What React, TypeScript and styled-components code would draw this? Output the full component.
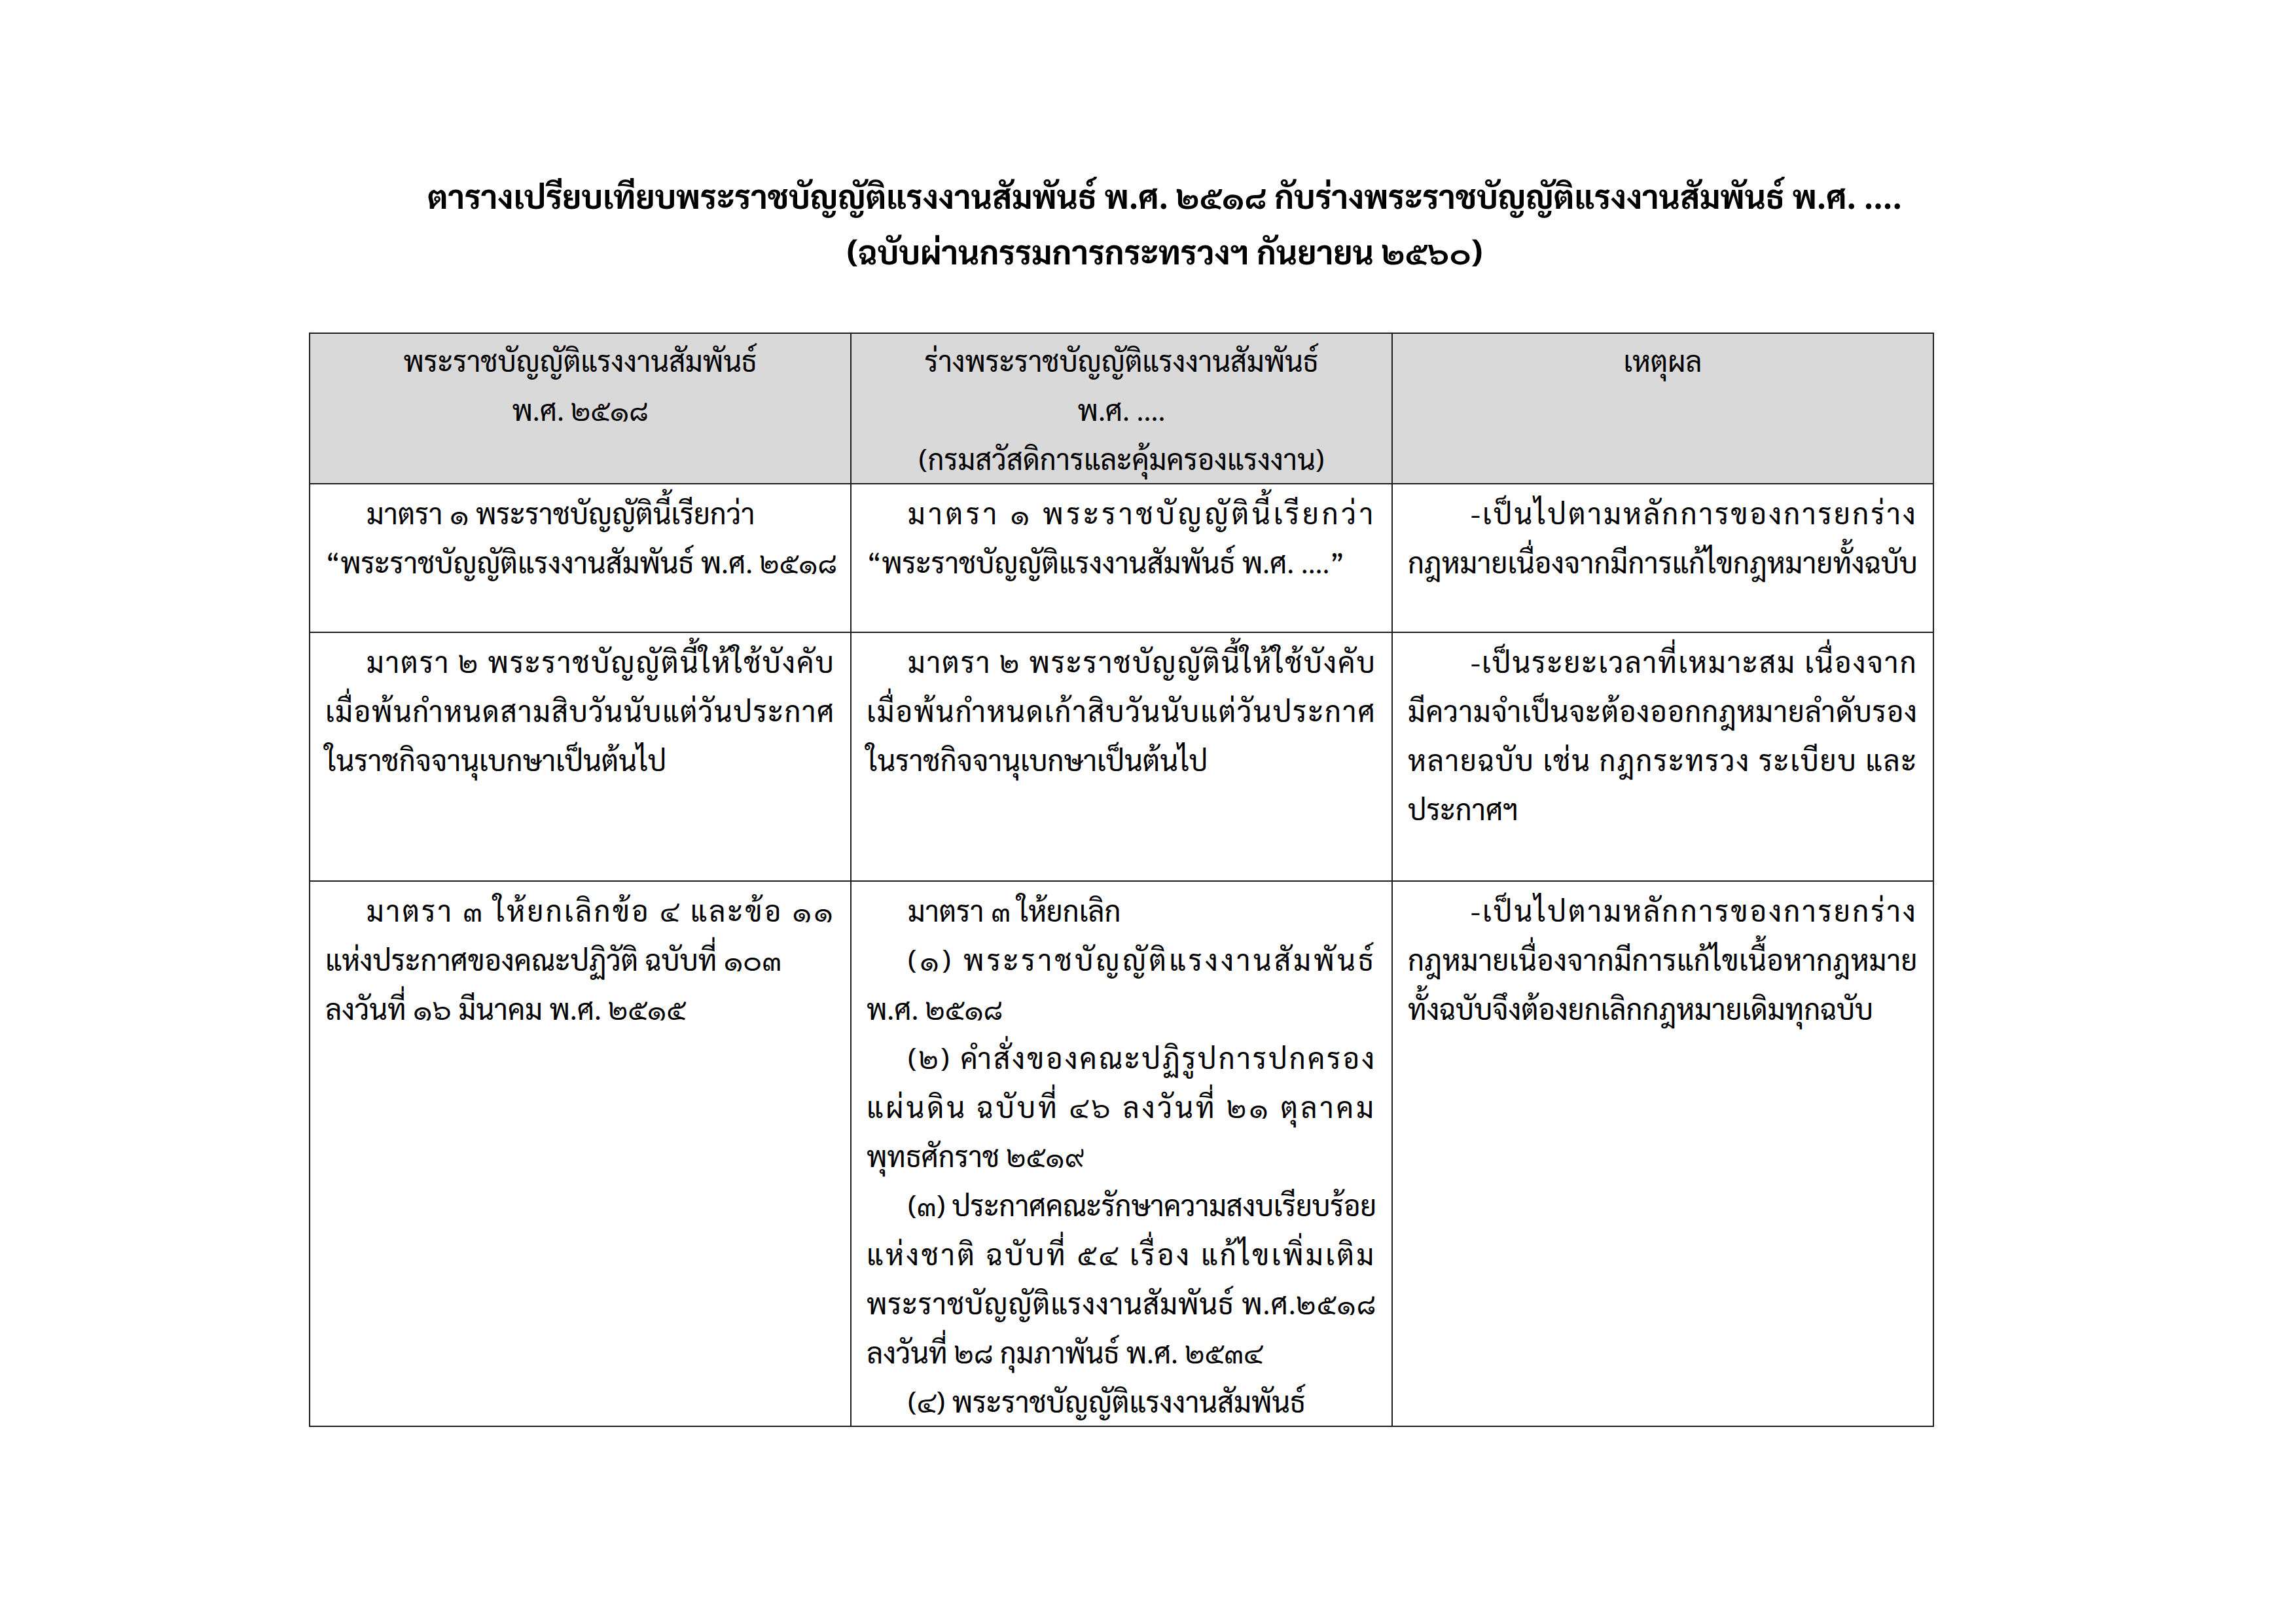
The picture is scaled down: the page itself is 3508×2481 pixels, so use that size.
import React, { useLayoutEffect, useRef } from 'react';
import styled, { createGlobalStyle } from 'styled-components';

const LINE = 75;
const THAI = `"TH Sarabun New", "TH SarabunPSK", "Sarabun", "Noto Sans Thai", "Noto Serif Thai", "Loma", "Garuda", "Norasi", "Liberation Sans", sans-serif`;

const GlobalStyle = createGlobalStyle`
  html, body {
    margin: 0;
    padding: 0;
    background: #ffffff;
  }
  body {
    font-family: ${THAI};
    color: #000;
  }
`;

const Page = styled.div`
  width: 3508px;
  min-height: 2481px;
  padding: 256px 0 0 472px;
  box-sizing: border-box;
`;

const Title = styled.h1`
  width: 2481px;
  margin: 0 0 82px;
  padding-left: 134px;
  box-sizing: border-box;
  font-size: 50px;
  font-weight: 700;
  line-height: 85px;
  text-align: center;
  white-space: nowrap;
`;

const Table = styled.table`
  width: 2483px;
  border-collapse: collapse;
  table-layout: fixed;
`;

const Row = styled.tr<{ $h: number }>`
  height: ${(p) => p.$h}px;
`;

const Cell = styled.td<{ $head?: boolean }>`
  width: 827px;
  box-sizing: border-box;
  border: 2px solid #1e1e1e;
  padding: ${(p) => (p.$head ? 3 : 6)}px 23px 0;
  vertical-align: top;
  background: ${(p) => (p.$head ? '#d9d9d9' : '#ffffff')};
  text-align: ${(p) => (p.$head ? 'center' : 'left')};
  font-weight: 400;
  font-size: 43.5px;
  line-height: ${LINE}px;
`;

const LineBox = styled.div<{ $indent: number }>`
  white-space: nowrap;
  padding-left: ${(p) => p.$indent}px;
`;

const LineText = styled.span`
  display: inline-block;
`;

// Word's "Thai distributed" lines: spread the letters so the line fills the cell.
const seg = typeof Intl !== 'undefined' && (Intl as any).Segmenter
  ? new (Intl as any).Segmenter('th', { granularity: 'grapheme' })
  : null;

function Line({ text, indent = 0, full = false }: { text: string; indent?: number; full?: boolean }) {
  const boxRef = useRef<HTMLDivElement>(null);
  const textRef = useRef<HTMLSpanElement>(null);

  useLayoutEffect(() => {
    if (!full) return;
    const measure = () => {
      const box = boxRef.current;
      const t = textRef.current;
      if (!box || !t) return;
      t.style.letterSpacing = '0px';
      const avail = box.clientWidth - indent;
      const natural = t.getBoundingClientRect().width;
      const n = seg ? Array.from(seg.segment(text)).length : text.length;
      t.style.letterSpacing = `${(avail - natural) / n}px`;
    };
    measure();
    document.fonts?.ready.then(measure);
  }, [full, indent, text]);

  return (
    <LineBox ref={boxRef} $indent={indent}>
      <LineText ref={textRef}>{text}</LineText>
    </LineBox>
  );
}

type L = { t: string; i?: number; f?: boolean };

const IND = 63;
const IND3 = 96;

const rows: { h: number; cells: L[][] }[] = [
  {
    h: 227,
    cells: [
      [
        { t: 'มาตรา ๑ พระราชบัญญัตินี้เรียกว่า', i: IND },
        { t: '“พระราชบัญญัติแรงงานสัมพันธ์ พ.ศ. ๒๕๑๘' },
      ],
      [
        { t: 'มาตรา ๑ พระราชบัญญัตินี้เรียกว่า', i: IND, f: true },
        { t: '“พระราชบัญญัติแรงงานสัมพันธ์ พ.ศ. ....”' },
      ],
      [
        { t: '-เป็นไปตามหลักการของการยกร่าง', i: IND3, f: true },
        { t: 'กฎหมายเนื่องจากมีการแก้ไขกฎหมายทั้งฉบับ', f: true },
      ],
    ],
  },
  {
    h: 380,
    cells: [
      [
        { t: 'มาตรา ๒ พระราชบัญญัตินี้ให้ใช้บังคับ', i: IND, f: true },
        { t: 'เมื่อพ้นกำหนดสามสิบวันนับแต่วันประกาศ', f: true },
        { t: 'ในราชกิจจานุเบกษาเป็นต้นไป' },
      ],
      [
        { t: 'มาตรา ๒ พระราชบัญญัตินี้ให้ใช้บังคับ', i: IND, f: true },
        { t: 'เมื่อพ้นกำหนดเก้าสิบวันนับแต่วันประกาศ', f: true },
        { t: 'ในราชกิจจานุเบกษาเป็นต้นไป' },
      ],
      [
        { t: '-เป็นระยะเวลาที่เหมาะสม เนื่องจาก', i: IND3, f: true },
        { t: 'มีความจำเป็นจะต้องออกกฎหมายลำดับรอง', f: true },
        { t: 'หลายฉบับ เช่น กฎกระทรวง ระเบียบ และ', f: true },
        { t: 'ประกาศฯ' },
      ],
    ],
  },
  {
    h: 831,
    cells: [
      [
        { t: 'มาตรา ๓ ให้ยกเลิกข้อ ๔ และข้อ ๑๑', i: IND, f: true },
        { t: 'แห่งประกาศของคณะปฏิวัติ ฉบับที่ ๑๐๓' },
        { t: 'ลงวันที่ ๑๖ มีนาคม พ.ศ. ๒๕๑๕' },
      ],
      [
        { t: 'มาตรา ๓ ให้ยกเลิก', i: IND },
        { t: '(๑) พระราชบัญญัติแรงงานสัมพันธ์', i: IND, f: true },
        { t: 'พ.ศ. ๒๕๑๘' },
        { t: '(๒) คำสั่งของคณะปฏิรูปการปกครอง', i: IND, f: true },
        { t: 'แผ่นดิน ฉบับที่ ๔๖ ลงวันที่ ๒๑ ตุลาคม', f: true },
        { t: 'พุทธศักราช ๒๕๑๙' },
        { t: '(๓) ประกาศคณะรักษาความสงบเรียบร้อย', i: IND, f: true },
        { t: 'แห่งชาติ ฉบับที่ ๕๔ เรื่อง แก้ไขเพิ่มเติม', f: true },
        { t: 'พระราชบัญญัติแรงงานสัมพันธ์ พ.ศ.๒๕๑๘', f: true },
        { t: 'ลงวันที่ ๒๘ กุมภาพันธ์ พ.ศ. ๒๕๓๔' },
        { t: '(๔) พระราชบัญญัติแรงงานสัมพันธ์', i: IND },
      ],
      [
        { t: '-เป็นไปตามหลักการของการยกร่าง', i: IND3, f: true },
        { t: 'กฎหมายเนื่องจากมีการแก้ไขเนื้อหากฎหมาย', f: true },
        { t: 'ทั้งฉบับจึงต้องยกเลิกกฎหมายเดิมทุกฉบับ' },
      ],
    ],
  },
];

const heads: string[][] = [
  ['พระราชบัญญัติแรงงานสัมพันธ์', 'พ.ศ. ๒๕๑๘'],
  ['ร่างพระราชบัญญัติแรงงานสัมพันธ์', 'พ.ศ. ....', '(กรมสวัสดิการและคุ้มครองแรงงาน)'],
  ['เหตุผล'],
];

export default function App(): JSX.Element {
  return (
    <>
      <GlobalStyle />
      <Page>
        <Title>
          ตารางเปรียบเทียบพระราชบัญญัติแรงงานสัมพันธ์ พ.ศ. ๒๕๑๘ กับร่างพระราชบัญญัติแรงงานสัมพันธ์ พ.ศ. ....
          <br />
          (ฉบับผ่านกรรมการกระทรวงฯ กันยายน ๒๕๖๐)
        </Title>
        <Table>
          <thead>
            <Row $h={228}>
              {heads.map((h, i) => (
                <Cell key={i} as="th" $head>
                  {h.map((t, j) => (
                    <LineBox key={j} $indent={0}>{t}</LineBox>
                  ))}
                </Cell>
              ))}
            </Row>
          </thead>
          <tbody>
            {rows.map((r, i) => (
              <Row key={i} $h={r.h}>
                {r.cells.map((c, j) => (
                  <Cell key={j}>
                    {c.map((l, k) => (
                      <Line key={k} text={l.t} indent={l.i} full={l.f} />
                    ))}
                  </Cell>
                ))}
              </Row>
            ))}
          </tbody>
        </Table>
      </Page>
    </>
  );
}
